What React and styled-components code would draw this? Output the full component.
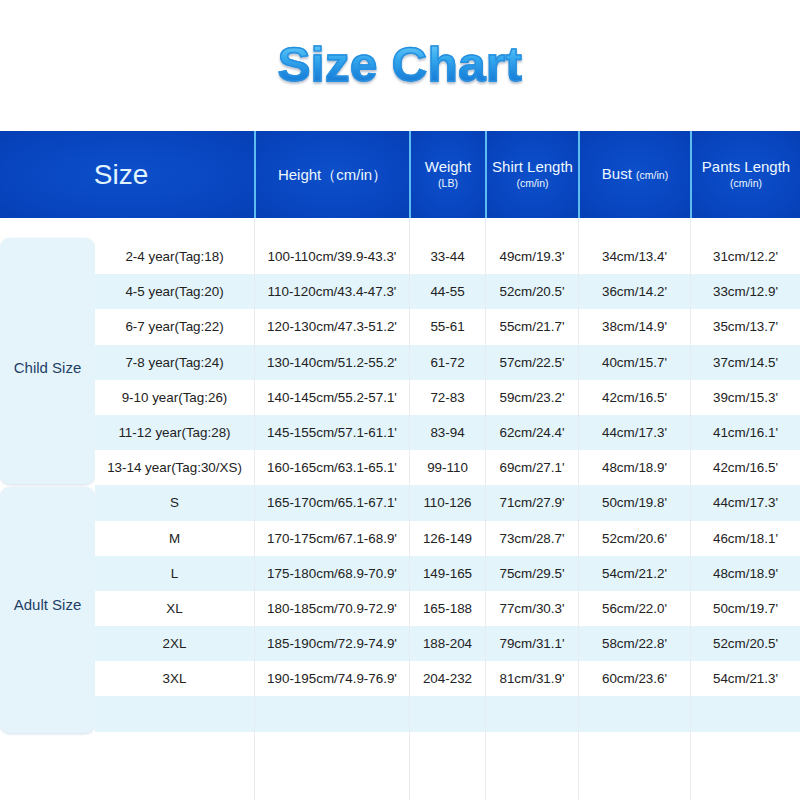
import React from 'react'
import styled, { createGlobalStyle } from 'styled-components'

const GlobalStyle = createGlobalStyle`
  html, body { margin: 0; padding: 0; background: #ffffff; }
  body { font-family: "Liberation Sans", Arial, sans-serif; }
`

const COLS = '159px 155px 76px 93px 112px 110px'

const child = [
  ['2-4 year(Tag:18)', "100-110cm/39.9-43.3'", '33-44', "49cm/19.3'", "34cm/13.4'", "31cm/12.2'"],
  ['4-5 year(Tag:20)', "110-120cm/43.4-47.3'", '44-55', "52cm/20.5'", "36cm/14.2'", "33cm/12.9'"],
  ['6-7 year(Tag:22)', "120-130cm/47.3-51.2'", '55-61', "55cm/21.7'", "38cm/14.9'", "35cm/13.7'"],
  ['7-8 year(Tag:24)', "130-140cm/51.2-55.2'", '61-72', "57cm/22.5'", "40cm/15.7'", "37cm/14.5'"],
  ['9-10 year(Tag:26)', "140-145cm/55.2-57.1'", '72-83', "59cm/23.2'", "42cm/16.5'", "39cm/15.3'"],
  ['11-12 year(Tag:28)', "145-155cm/57.1-61.1'", '83-94', "62cm/24.4'", "44cm/17.3'", "41cm/16.1'"],
  ['13-14 year(Tag:30/XS)', "160-165cm/63.1-65.1'", '99-110', "69cm/27.1'", "48cm/18.9'", "42cm/16.5'"],
]

const adult = [
  ['S', "165-170cm/65.1-67.1'", '110-126', "71cm/27.9'", "50cm/19.8'", "44cm/17.3'"],
  ['M', "170-175cm/67.1-68.9'", '126-149', "73cm/28.7'", "52cm/20.6'", "46cm/18.1'"],
  ['L', "175-180cm/68.9-70.9'", '149-165', "75cm/29.5'", "54cm/21.2'", "48cm/18.9'"],
  ['XL', "180-185cm/70.9-72.9'", '165-188', "77cm/30.3'", "56cm/22.0'", "50cm/19.7'"],
  ['2XL', "185-190cm/72.9-74.9'", '188-204', "79cm/31.1'", "58cm/22.8'", "52cm/20.5'"],
  ['3XL', "190-195cm/74.9-76.9'", '204-232', "81cm/31.9'", "60cm/23.6'", "54cm/21.3'"],
]

const rows = [...child, ...adult, ['', '', '', '', '', '']]

export const App = () => {
  return (
    <Page>
      <GlobalStyle />
      <TitleBar>
        <Title>Size Chart</Title>
      </TitleBar>

      <HeaderRow>
        <HeadCell $first>
          <SizeHead>Size</SizeHead>
        </HeadCell>
        <HeadCell>
          <HeadText>Height（cm/in）</HeadText>
        </HeadCell>
        <HeadCell>
          <HeadText>Weight</HeadText>
          <HeadUnit>(LB)</HeadUnit>
        </HeadCell>
        <HeadCell>
          <HeadText>Shirt Length</HeadText>
          <HeadUnit>(cm/in)</HeadUnit>
        </HeadCell>
        <HeadCell>
          <HeadText>
            Bust <InlineUnit>(cm/in)</InlineUnit>
          </HeadText>
        </HeadCell>
        <HeadCell>
          <HeadText>Pants Length</HeadText>
          <HeadUnit>(cm/in)</HeadUnit>
        </HeadCell>
      </HeaderRow>

      <Body>
        <GroupColumn>
          <GroupBox $shift={12}>Child Size</GroupBox>
          <GroupBox $shift={-12}>Adult Size</GroupBox>
        </GroupColumn>

        <Table>
          <Row $height={21}>
            {[0, 1, 2, 3, 4, 5].map((i) => <Cell key={i} />)}
          </Row>
          {rows.map((r, idx) => (
            <Row key={idx} $striped={idx % 2 === 1}>
              {r.map((v, i) => (
                <Cell key={i}>{v}</Cell>
              ))}
            </Row>
          ))}
          <Filler>
            {[0, 1, 2, 3, 4, 5].map((i) => <Cell key={i} />)}
          </Filler>
        </Table>
      </Body>
    </Page>
  )
}

const Page = styled.div`
  width: 800px;
  height: 800px;
  overflow: hidden;
  display: flex;
  flex-direction: column;
  background: #ffffff;
`

const TitleBar = styled.div`
  height: 131px;
  display: flex;
  align-items: center;
  justify-content: center;
  padding-bottom: 4px;
  box-sizing: border-box;
`

const Title = styled.h1`
  margin: 0;
  font-family: "Liberation Sans", Arial, sans-serif;
  font-weight: 700;
  font-size: 49px;
  letter-spacing: 0.5px;
  background: linear-gradient(180deg, #7fd8fb 0%, #35a9ee 40%, #1d86dc 70%, #1a6fcb 100%);
  -webkit-background-clip: text;
  background-clip: text;
  color: transparent;
  -webkit-text-stroke: 1.4px #2690e0;
  filter: drop-shadow(0 2px 1px rgba(40, 70, 110, 0.35));
`

const HeaderRow = styled.div`
  height: 87px;
  display: grid;
  grid-template-columns: 254px 155px 76px 93px 112px 110px;
  background: #0745bf;
  flex-shrink: 0;
`

const HeadCell = styled.div`
  box-sizing: border-box;
  display: flex;
  flex-direction: column;
  align-items: center;
  justify-content: center;
  border-left: ${(p) => (p.$first ? 'none' : '2px solid #5dbdf0')};
  background: radial-gradient(ellipse at 50% 50%, #0d4fca 0%, #0846c0 60%, #063fb5 100%);
  color: #eef8ff;
  text-align: center;
`

const SizeHead = styled.span`
  font-size: 28px;
  color: #e2f5ff;
  margin-left: -12px;
`

const HeadText = styled.span`
  font-size: 15px;
  line-height: 18px;
  white-space: nowrap;
`

const HeadUnit = styled.span`
  font-size: 10.5px;
  line-height: 15px;
`

const InlineUnit = styled.span`
  font-size: 10.5px;
`

const Body = styled.div`
  flex: 1;
  display: flex;
  min-height: 0;
`

const GroupColumn = styled.div`
  width: 95px;
  flex-shrink: 0;
  padding-top: 20px;
  display: flex;
  flex-direction: column;
  gap: 3px;
  box-sizing: border-box;
`

const GroupBox = styled.div`
  height: 246px;
  box-sizing: border-box;
  padding-top: ${(p) => (p.$shift > 0 ? p.$shift : 0)}px;
  padding-bottom: ${(p) => (p.$shift < 0 ? -p.$shift : 0)}px;
  background: #e5f4fb;
  border-radius: 10px;
  box-shadow: 0 1px 3px rgba(120, 160, 190, 0.35);
  display: flex;
  align-items: center;
  justify-content: center;
  font-size: 15px;
  color: #1e3f66;
`

const Table = styled.div`
  flex: 1;
  display: flex;
  flex-direction: column;
`

const Row = styled.div`
  display: grid;
  grid-template-columns: ${COLS};
  height: ${(p) => (p.$height ? `${p.$height}px` : '35.2px')};
  flex-shrink: 0;
  background: ${(p) => (p.$striped ? '#e3f4fb' : '#ffffff')};
`

const Filler = styled.div`
  flex: 1;
  display: grid;
  grid-template-columns: ${COLS};
`

const Cell = styled.div`
  box-sizing: border-box;
  display: flex;
  align-items: center;
  justify-content: center;
  font-size: 13.4px;
  color: #222222;
  white-space: nowrap;
  border-left: 1px solid #e6ecf0;

  &:first-child {
    border-left: none;
  }
`

export default App
